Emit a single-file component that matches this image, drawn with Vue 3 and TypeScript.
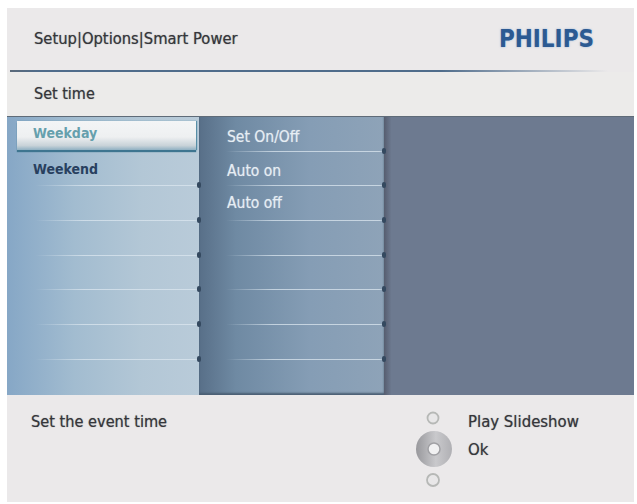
<script setup lang="ts">
const leftRows: string[] = ['Weekday', 'Weekend', '', '', '', '', '', '']
const midRows: string[] = ['Set On/Off', 'Auto on', 'Auto off', '', '', '', '', '']
</script>

<template>
  <div class="page">
    <div class="frame">
      <header class="head">
        <span class="crumb">Setup|Options|Smart Power</span>
        <span class="logo">PHILIPS</span>
      </header>
      <div class="rule"></div>
      <div class="sub">Set time</div>
      <main class="panes">
        <ul class="col left">
          <li v-for="(r, i) in leftRows" :key="i" class="row" :class="{ sel: i === 0 }">
            <span>{{ r }}</span><i v-if="i > 0 && i < 7" class="dot"></i>
          </li>
        </ul>
        <ul class="col mid">
          <li v-for="(r, i) in midRows" :key="i" class="row">
            <span>{{ r }}</span><i v-if="i < 7" class="dot"></i>
          </li>
        </ul>
        <div class="right"></div>
      </main>
      <footer class="foot">
        <span class="hint">Set the event time</span>
        <div class="keys">
          <svg class="pad" width="40" height="78" viewBox="0 0 40 78">
            <defs>
              <linearGradient id="ring" x1="0" y1="0" x2="1" y2="0">
                <stop offset="0" stop-color="#98989c" />
                <stop offset="0.55" stop-color="#c9c9cc" />
                <stop offset="1" stop-color="#b0b0b4" />
              </linearGradient>
            </defs>
            <circle cx="19" cy="7" r="5.5" fill="#e8e7e8" stroke="#b6b8b6" stroke-width="1.8" />
            <circle cx="20" cy="38" r="18" fill="url(#ring)" />
            <circle cx="20" cy="38" r="6" fill="#f1f1f2" stroke="#a0a0a4" stroke-width="1.5" />
            <circle cx="19" cy="69" r="6" fill="#e8e7e8" stroke="#b6b8b6" stroke-width="1.8" />
          </svg>
          <div class="labels">
            <span>Play Slideshow</span>
            <span>Ok</span>
          </div>
        </div>
      </footer>
    </div>
  </div>
</template>

<style>
html, body { margin: 0; background: #fff; }
</style>

<style scoped>
.page {
  width: 637px;
  height: 504px;
  padding: 8px 3px 2px 7px;
  box-sizing: border-box;
  overflow: hidden;
  font-family: "DejaVu Sans", sans-serif;
  font-stretch: condensed;
}
.frame {
  height: 100%;
  display: flex;
  flex-direction: column;
  background: #ebe9ea;
  color: #35363b;
  text-shadow: 0 0 1px rgba(53, 54, 59, 0.6);
}
.head {
  height: 62px;
  display: flex;
  align-items: center;
  justify-content: space-between;
  padding: 0 40px 0 27px;
  font-size: 16.4px;
}
.crumb { position: relative; top: -1px; }
.logo {
  font-family: "DejaVu Sans", sans-serif;
  font-weight: 700;
  font-size: 24px;
  color: #2c5a92;
  text-shadow: 0 0 2px rgba(90, 140, 200, 0.6);
}
.rule {
  height: 2px;
  margin: 0 26px 0 3px;
  background: linear-gradient(90deg, #5b6a7a, #4f6c8b 5%, #4f6c8b 72%, #ebe9ea);
}
.sub {
  height: 44px;
  display: flex;
  align-items: center;
  padding: 0 0 2px 27px;
  box-sizing: border-box;
  font-size: 16px;
  background: #ecebea;
}
.panes {
  height: 279px;
  display: flex;
  background: #6d7a90;
  border-top: 1px solid #5f6b78;
  box-sizing: border-box;
}
.col {
  margin: 0;
  padding: 0;
  list-style: none;
  display: flex;
  flex-direction: column;
}
.left {
  width: 192px;
  background: linear-gradient(90deg, #86a7c6, #a2bcd0 35%, #b3c7d6 70%, #b9cbd9);
  color: #28405f;
  font-weight: 700;
  text-shadow: none;
}
.mid {
  width: 185px;
  background: linear-gradient(90deg, #586f88, #6f8aa3 20%, #859db5 60%, #8ea3b8);
  color: #e6edf3;
  box-shadow: inset 0 -2px 2px #4b5f74;
  text-shadow: 0 0 1px rgba(230, 237, 243, 0.6);
}
.right {
  flex: 1;
  background: linear-gradient(90deg, #565d6f, #6d7a90 3%);
}
.row {
  position: relative;
  height: 34.7px;
  flex: none;
  box-sizing: border-box;
  padding: 1px 0 0 28px;
  display: flex;
  align-items: center;
  font-size: 14px;
  border-bottom: 1.5px solid transparent;
  border-image: linear-gradient(90deg, transparent 15%, rgba(219, 230, 239, 0.75) 40%, rgba(219, 230, 239, 0.75) 97%, transparent) 1;
}
.mid .row { font-size: 15.5px; }
.mid .row:nth-child(1) { padding-top: 7px; }
.mid .row:nth-child(2) { padding-top: 5px; }
.mid .row:nth-child(3) { padding-top: 0; padding-bottom: 1px; }
.left .row { padding-left: 26px; }
.mid .row:last-child, .left .row:last-child { border-bottom: 0; }
.left .row.sel {
  width: 179px;
  height: 29px;
  margin: 4px 0 1.7px 10px;
  padding: 0 0 5px 16px;
  border: 0;
  color: #66a0ad;
  background: linear-gradient(180deg, #f3f5f6 0%, #eef0f1 55%, #c8d2d8 85%, #8fb0c2);
  box-shadow: 0 2px 1px #3e7590, 1px 0 1px #5d93ab;
}
.dot {
  position: absolute;
  right: -2px;
  bottom: -3px;
  width: 4px;
  height: 6px;
  border-radius: 2px;
  background: #34495f;
}
.foot {
  flex: 1;
  display: flex;
  justify-content: space-between;
  padding: 16px 0 0 24px;
  font-size: 16.2px;
}
.hint { margin-top: 1px; }
.keys {
  display: flex;
  gap: 14px;
  width: 220px;
  margin-top: -6px;
  height: 84px;
  align-items: flex-start;
}
.pad { margin-top: 6px; flex: none; }
.labels {
  display: flex;
  flex-direction: column;
  gap: 9px;
  margin-top: 7px;
  font-size: 16.6px;
}
</style>
